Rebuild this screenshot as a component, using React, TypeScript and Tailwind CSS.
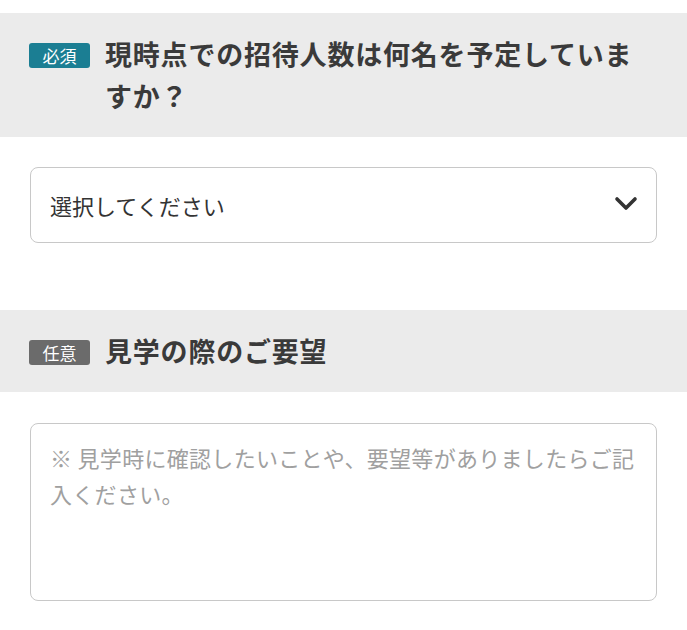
import { useState } from 'react'

const font = { fontFamily: '"Noto Sans CJK JP", "Noto Sans", sans-serif' }

function Badge({ label, required }: { label: string; required?: boolean }) {
  return (
    <span
      className={`mt-[2px] flex h-[25px] w-[61px] shrink-0 items-center justify-center rounded-[3px] text-[17px] leading-none text-white ${
        required ? 'bg-[#1b7e93]' : 'bg-[#6b6b6b]'
      }`}
    >
      {label}
    </span>
  )
}

function SectionHeading({ label, required, children }: { label: string; required?: boolean; children: string }) {
  return (
    <div className="flex items-start gap-[15px] bg-[#ebebeb] py-[20px] pl-[29px] pr-[48px]">
      <div className="flex h-[42px] items-center">
        <Badge label={label} required={required} />
      </div>
      <h2 className="text-[27px] font-bold leading-[42px] tracking-[0.8px] text-[#3a3a3a]">{children}</h2>
    </div>
  )
}

export default function App() {
  const [guests, setGuests] = useState('')
  const [request, setRequest] = useState('')

  return (
    <div className="min-h-[630px] bg-white pt-[13px]" style={font}>
      <SectionHeading label="必須" required>
        現時点での招待人数は何名を予定していますか？
      </SectionHeading>

      <div className="px-[30px] pt-[30px]">
        <div className="relative">
          <select
            value={guests}
            onChange={(e) => setGuests(e.target.value)}
            className="h-[76px] w-full appearance-none rounded-[8px] border border-[#c8c8c8] bg-white pl-[19px] pr-[60px] text-[22px] text-[#333] outline-none"
          >
            <option value="">選択してください</option>
            <option value="1">〜20名</option>
            <option value="2">21〜40名</option>
            <option value="3">41〜60名</option>
            <option value="4">61名以上</option>
          </select>
          <svg
            className="pointer-events-none absolute right-[19px] top-[28px]"
            width="24"
            height="18"
            viewBox="0 0 24 18"
            fill="none"
          >
            <path d="M3 4l9 9 9-9" stroke="#333" strokeWidth="3.6" strokeLinecap="round" strokeLinejoin="round" />
          </svg>
        </div>
      </div>

      <div className="mt-[67px]">
        <SectionHeading label="任意">見学の際のご要望</SectionHeading>
      </div>

      <div className="px-[30px] pt-[31px]">
        <textarea
          value={request}
          onChange={(e) => setRequest(e.target.value)}
          placeholder="※ 見学時に確認したいことや、要望等がありましたらご記入ください。"
          className="block h-[178px] w-full resize-none rounded-[8px] border border-[#c8c8c8] bg-white px-[19px] py-[15px] text-[22px] leading-[36px] tracking-[0.3px] text-[#333] outline-none placeholder:text-[#a0a0a0]"
        />
      </div>
    </div>
  )
}
